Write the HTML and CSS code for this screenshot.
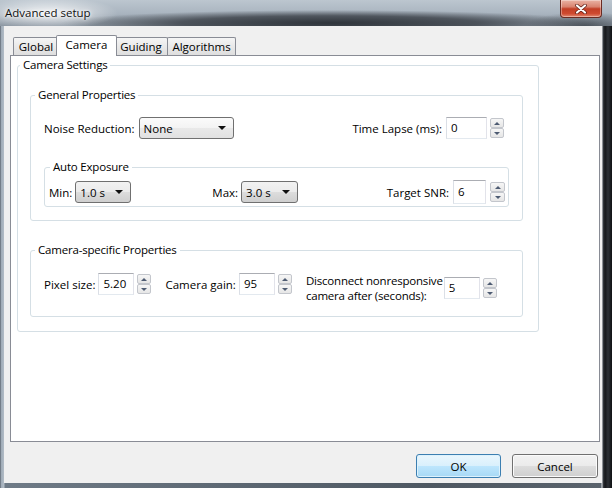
FILE: index.html
```html
<!DOCTYPE html>
<html lang="en">
<head>
    <meta charset="UTF-8">
    <title>Advanced setup</title>
    <link rel="stylesheet" href="styles.css">
</head>
<body>

    <div class="window">
        <div class="titlebar">
            <span class="title">Advanced setup</span>
            <span class="close">
                <svg width="12" height="10" viewBox="0 0 12 10">
                    <path d="M2 1.5 L10 8.5 M10 1.5 L2 8.5" stroke="#5a1a12" stroke-width="3.6" stroke-linecap="round"/>
                    <path d="M2 1.5 L10 8.5 M10 1.5 L2 8.5" stroke="#fff" stroke-width="2.2" stroke-linecap="round"/>
                </svg>
            </span>
        </div>

        <div class="client">
            <div class="notebook">
                <div class="tabs">
                    <span class="tab tab-global">Global</span>
                    <span class="tab tab-camera active">Camera</span>
                    <span class="tab tab-guiding">Guiding</span>
                    <span class="tab tab-algorithms">Algorithms</span>
                </div>

                <div class="panel">
                    <fieldset class="group outer">
                        <legend>Camera Settings</legend>

                        <fieldset class="group general">
                            <legend>General Properties</legend>
                            <div class="row row-noise">
                                <div class="field">
                                    <label>Noise Reduction:</label>
                                    <div class="choice choice-light w95">None</div>
                                </div>
                                <div class="field">
                                    <label>Time Lapse (ms):</label>
                                    <div class="text w41">0</div>
                                    <div class="spin"><span class="up"></span><span class="down"></span></div>
                                </div>
                            </div>

                            <fieldset class="group auto">
                                <legend>Auto Exposure</legend>
                                <div class="row row-exposure">
                                    <div class="field">
                                        <label class="tight">Min:</label>
                                        <div class="choice w56">1.0 s</div>
                                    </div>
                                    <div class="field field-max">
                                        <label class="tight">Max:</label>
                                        <div class="choice w57">3.0 s</div>
                                    </div>
                                    <div class="field field-snr">
                                        <label>Target SNR:</label>
                                        <div class="text text-tall w33">6</div>
                                        <div class="spin spin-wide"><span class="up"></span><span class="down"></span></div>
                                    </div>
                                </div>
                            </fieldset>
                        </fieldset>

                        <fieldset class="group specific">
                            <legend>Camera-specific Properties</legend>
                            <div class="row row-specific">
                                <div class="field field-top">
                                    <label class="tight">Pixel size:</label>
                                    <div class="text w36">5.20</div>
                                    <div class="spin"><span class="up"></span><span class="down"></span></div>
                                </div>
                                <div class="field field-top">
                                    <label class="tight">Camera gain:</label>
                                    <div class="text w36">95</div>
                                    <div class="spin"><span class="up"></span><span class="down"></span></div>
                                </div>
                                <div class="field field-tall">
                                    <label class="two-line">Disconnect nonresponsive<br>camera after (seconds):</label>
                                    <div class="text w36">5</div>
                                    <div class="spin"><span class="up"></span><span class="down"></span></div>
                                </div>
                            </div>
                        </fieldset>
                    </fieldset>
                </div>
            </div>

            <div class="buttons">
                <button class="btn btn-default">OK</button>
                <button class="btn btn-cancel">Cancel</button>
            </div>
        </div>
    </div>

</body>
</html>
```

FILE: styles.css
```css
* {
    box-sizing: border-box;
}
body {
    margin: 0;
    font-family: "Open Sans", "Noto Sans", sans-serif;
    font-size: 11.5px;
    color: #000;
}

/* window frame (aero glass) */
.window {
    width: 612px;
    height: 488px;
    display: flex;
    flex-direction: column;
    overflow: hidden;
    background:
        linear-gradient(to right, #4a525c 0, #9eaab6 1px, #b3bdc7 4px, rgba(0,0,0,0) 5px),
        linear-gradient(to right, #6f7b87 0, #4e5862 70%, #5a636c 601px, #dfe2e5 602px, #3a3f45 603px, #15171a 605px, #2c3035 608px, #0f1113 612px);
}
.titlebar {
    height: 26px;
    display: flex;
    align-items: flex-start;
    justify-content: space-between;
    background:
        radial-gradient(ellipse 70px 16px at 48px 13px, rgba(255,255,255,0.85), rgba(255,255,255,0)),
        radial-gradient(ellipse 270px 13px at 330px 23px, rgba(42,47,53,0.95), rgba(52,57,64,0.75) 55%, rgba(60,66,73,0)),
        radial-gradient(ellipse 60px 14px at 585px 26px, rgba(50,56,63,0.7), rgba(50,56,63,0)),
        linear-gradient(#bcc6cf, #aab5c0 50%, #8e99a4);
}
.title {
    margin: 4px 0 0 5px;
    line-height: 17px;
    color: #111;
    text-shadow: 0 0 6px #fff, 0 0 3px #fff;
}
.close {
    width: 42px;
    height: 18px;
    margin-right: 10px;
    border: 1px solid #6a2b22;
    border-top: none;
    border-radius: 0 0 4px 4px;
    background: linear-gradient(#eab3a5, #d98370 40%, #c23e26 52%, #cf4a30 80%, #e28a72);
    box-shadow: inset 0 0 0 1px rgba(255,255,255,0.35);
    display: flex;
    align-items: center;
    justify-content: center;
}

/* client area */
.client {
    flex: 1;
    margin: 0 10px 5px 4px;
    background: #f0f0f0;
    display: flex;
    flex-direction: column;
}
.notebook {
    margin: 9px 2px 0 6px;
}
.tabs {
    display: flex;
    align-items: flex-end;
    height: 20px;
    padding-left: 3px;
}
.tab {
    height: 18px;
    margin-right: -1px;
    border: 1px solid #898c95;
    border-bottom: none;
    border-radius: 2px 2px 0 0;
    background: linear-gradient(#f5f5f5, #e9e9e9 50%, #dedede);
    text-align: center;
    line-height: 17px;
}
.tab-global { width: 46px; }
.tab-guiding { width: 54px; }
.tab-algorithms { width: 69px; }
.tab.active {
    position: relative;
    width: 61px;
    height: 21px;
    margin: 0 -3px -1px -2px;
    background: #fff;
    line-height: 18px;
}
.panel {
    height: 387px;
    border: 1px solid #898c95;
    background: #fff;
    padding: 1px 0 0 6px;
}

/* group boxes */
.group {
    margin: 0;
    padding: 0;
    min-width: 0;
    border: 1px solid #d5dfe5;
    border-radius: 3px;
}
.group > legend {
    padding: 0 3px;
    margin-left: 4px;
    line-height: 16px;
    letter-spacing: -0.2px;
}
.outer {
    width: 522px;
    padding-bottom: 14px;
}
.outer > legend {
    margin-left: 2px;
}
.general {
    margin: 14px 15px 0 12px;
    padding-bottom: 13px;
}
.auto {
    margin: 20px 13px 0;
    padding-bottom: 3px;
}
.auto > legend {
    margin-left: 5px;
}
.specific {
    margin: 21px 15px 0 12px;
    padding-bottom: 13px;
}

/* rows and fields */
.row {
    display: flex;
    align-items: center;
}
.row-noise {
    margin-top: 14px;
    height: 22px;
    padding: 0 18px 0 13px;
    justify-content: space-between;
}
.row-exposure {
    margin-top: 6px;
    height: 22px;
    padding: 0 3px 0 4px;
}
.row-specific {
    margin-top: 15px;
    height: 30px;
    padding-left: 13px;
    align-items: flex-start;
}
.field {
    display: flex;
    align-items: center;
}
.field label {
    margin-right: 4px;
    white-space: nowrap;
}
.field label.tight {
    margin-right: 3px;
}
.field-max {
    margin-left: 81px;
}
.field-snr {
    margin-left: auto;
}
.field-top {
    height: 22px;
    margin-right: 14px;
}
.field-tall {
    height: 30px;
}
.field label.two-line {
    margin-right: 1px;
    line-height: 15px;
    letter-spacing: -0.2px;
}

/* controls */
.choice {
    height: 22px;
    border: 1px solid #707070;
    border-radius: 3px;
    background: linear-gradient(#f2f2f2, #ebebeb 50%, #dddddd 50%, #cfcfcf);
    padding-left: 4px;
    display: flex;
    align-items: center;
    justify-content: space-between;
}
.choice-light {
    background: linear-gradient(#fbfbfb, #f3f3f3 50%, #e9e9e9 50%, #e1e1e1);
}
.choice::after {
    content: "";
    margin-right: 7px;
    border-left: 4px solid transparent;
    border-right: 4px solid transparent;
    border-top: 4px solid #111;
}
.text {
    height: 22px;
    border: 1px solid;
    border-color: #abadb3 #e2e3ea #e3e9ef #dbdfe6;
    background: #fff;
    padding-left: 4px;
    line-height: 20px;
}
.text-tall {
    height: 24px;
    line-height: 22px;
}
.w33 { width: 33px; }
.w36 { width: 36px; }
.w41 { width: 41px; }
.w56 { width: 56px; }
.w57 { width: 57px; }
.w95 { width: 95px; }
.spin {
    width: 14px;
    height: 20px;
    margin-left: 3px;
    display: flex;
    flex-direction: column;
}
.spin-wide {
    width: 15px;
    margin-left: 4px;
}
.spin span {
    flex: 1;
    border: 1px solid #c3c6cc;
    border-radius: 2px;
    background: linear-gradient(#f6f6f6, #e6e6e6);
    display: flex;
    align-items: center;
    justify-content: center;
}
.spin .up::after,
.spin .down::after {
    content: "";
    border-left: 3px solid transparent;
    border-right: 3px solid transparent;
}
.spin .up::after {
    border-bottom: 3px solid #4d5b72;
}
.spin .down::after {
    border-top: 3px solid #4d5b72;
}

/* dialog buttons */
.buttons {
    margin: 12px 4px 0 0;
    display: flex;
    justify-content: flex-end;
    gap: 11px;
}
.btn {
    width: 85px;
    height: 24px;
    padding: 0;
    font: inherit;
    color: #000;
    border: 1px solid #707070;
    border-radius: 3px;
    background: linear-gradient(#f2f2f2, #ebebeb 50%, #dddddd 50%, #cfcfcf);
    box-shadow: inset 0 0 0 1px #fbfbfb;
}
.btn-default {
    border-color: #3c7fb1;
    background: linear-gradient(#eaf6fd, #d9f0fc 50%, #bee6fd 50%, #a7d9f5);
    box-shadow: inset 0 0 0 1px #ddf2fd;
}
.btn-cancel {
    width: 86px;
}
```
